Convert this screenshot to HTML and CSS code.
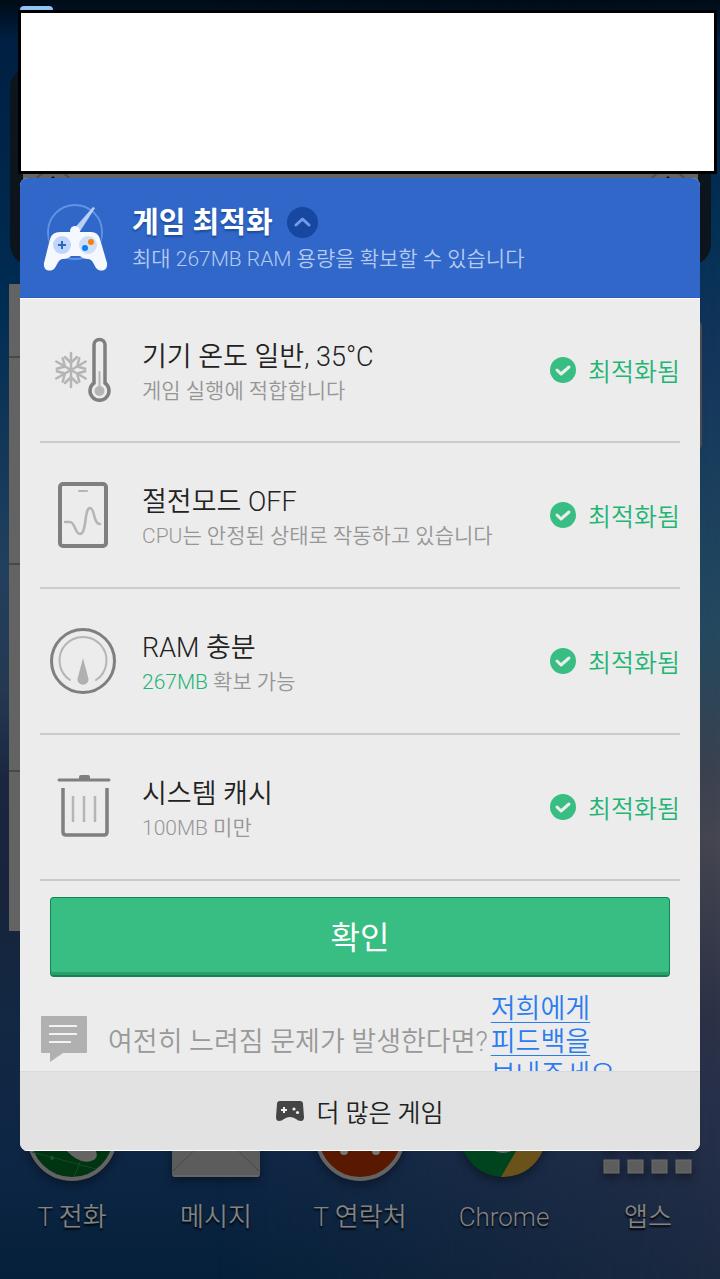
FILE: index.html
```html
<!DOCTYPE html>
<html lang="ko">
<head>
    <meta charset="UTF-8">
    <meta name="viewport" content="width=device-width, initial-scale=1.0">
    <title>게임 최적화</title>
    <link rel="stylesheet" href="styles.css">
</head>
<body>
    <div class="screen">
        <!-- Home screen behind the dialog -->
        <div class="home">
            <div class="clock-widget">
                <div class="clock-face">
                    <svg width="40" height="10" viewBox="0 0 40 10"><path d="M1 10A20 20 0 0 1 39 10" fill="none" stroke="#4d4d4d" stroke-width="2"/><path d="M17 5l3-3 3 3z" fill="#111"/></svg>
                    <svg width="40" height="10" viewBox="0 0 40 10"><path d="M1 10A20 20 0 0 1 39 10" fill="none" stroke="#4d4d4d" stroke-width="2"/><path d="M17 5l3-3 3 3z" fill="#111"/></svg>
                </div>
            </div>
            <div class="widgets">
                <div class="list-widget">
                    <div class="list-row"></div>
                    <div class="list-row"></div>
                    <div class="list-row"></div>
                    <div class="list-row"></div>
                </div>
                <div class="side-widget"></div>
            </div>
            <div class="dock">
                <div class="app">
                    <svg width="96" height="96" viewBox="0 0 96 96">
                        <circle cx="48" cy="50" r="43" fill="#003512" stroke="#636363" stroke-width="4"/>
                        <path d="M8 66l64 17M60 66L50 91" stroke="#1c4626" fill="none"/>
                        <circle cx="28" cy="72" r="2" fill="#27512f"/>
                        <path d="M40 62c10 12 24 18 32 10 2-4 0-8-4-10z" fill="#656565"/>
                    </svg>
                    <span>T 전화</span>
                </div>
                <div class="app">
                    <svg width="96" height="96" viewBox="0 0 96 96">
                        <rect x="4" y="30" width="88" height="61" rx="3" fill="#5c5c5c"/>
                        <path d="M5 85l28-27M91 85L63 58" stroke="#484848" fill="none"/>
                        <path d="M5 90h86" stroke="#707070"/>
                    </svg>
                    <span>메시지</span>
                </div>
                <div class="app">
                    <svg width="96" height="96" viewBox="0 0 96 96">
                        <circle cx="48" cy="50" r="43" fill="#581900" stroke="#636363" stroke-width="4"/>
                        <circle cx="32" cy="65" r="4" fill="#777"/>
                        <circle cx="64" cy="65" r="4" fill="#777"/>
                    </svg>
                    <span>T 연락처</span>
                </div>
                <div class="app">
                    <svg width="96" height="96" viewBox="0 0 96 96">
                        <circle cx="47" cy="48" r="43" fill="#00431f"/>
                        <path d="M45 91A43 43 0 0 0 90 48H70z" fill="#6b521b"/>
                        <circle cx="47" cy="48" r="19" fill="#656565"/>
                    </svg>
                    <span>Chrome</span>
                </div>
                <div class="app">
                    <svg width="96" height="96" viewBox="0 0 96 96">
                        <g fill="#5d5d5d" stroke="#6c6c6c">
                            <rect x="4" y="50" width="15" height="13"/><rect x="28" y="50" width="15" height="13"/><rect x="52" y="50" width="15" height="13"/><rect x="76" y="50" width="15" height="13"/>
                            <rect x="4" y="74" width="15" height="13"/><rect x="28" y="74" width="15" height="13"/><rect x="52" y="74" width="15" height="13"/><rect x="76" y="74" width="15" height="13"/>
                        </g>
                    </svg>
                    <span>앱스</span>
                </div>
            </div>
        </div>

        <div class="overlay">
            <div class="tab"></div>
            <div class="blank-box"></div>

            <div class="dialog" role="dialog" aria-labelledby="dialogTitle">
                <div class="dialog-header">
                    <svg width="66" height="68" viewBox="0 0 66 68">
                        <circle cx="32" cy="28" r="27" fill="none" stroke="#6292e6" stroke-width="2"/>
                        <path d="M6 29h52v10H6z" fill="#3067c8"/>
                        <path d="M29 27L50 3l2 1-16 25z" fill="#b9cff5"/>
                        <circle cx="32" cy="27" r="5" fill="#f5f8ff"/>
                        <path d="M17 28H48Q55 28 57 35L64 59C65 67 58 68 54 65C51 62 50 55 45 55Q40 55 37 52H28Q25 55 20 55C15 55 14 62 11 65C7 68 0 67 1 59L7 35Q9 28 17 28Z" fill="#f5f8ff"/>
                        <circle cx="19" cy="41" r="9" fill="#c0d5fb"/>
                        <circle cx="45" cy="41" r="9" fill="#d0dff8"/>
                        <path d="M19 37v8M15 41h8" stroke="#2f66c6" stroke-width="2"/>
                        <circle cx="48" cy="38" r="3" fill="#f7820a"/>
                        <circle cx="42" cy="44" r="3" fill="#0b80f4"/>
                    </svg>
                    <div class="header-text">
                        <div class="title-line">
                            <h1 id="dialogTitle">게임 최적화</h1>
                            <button class="collapse" aria-label="접기">
                                <svg width="31" height="31" viewBox="0 0 31 31"><path d="M9 18l6.500-6 6.500 6" fill="none" stroke="#6d9cf0" stroke-width="3" stroke-linecap="round" stroke-linejoin="round"/></svg>
                            </button>
                        </div>
                        <p>최대 267MB RAM 용량을 확보할 수 있습니다</p>
                    </div>
                </div>

                <ul class="checks">
                    <li class="check">
                        <svg width="68" height="68" viewBox="0 0 68 68" fill="none" stroke-linecap="round">
                            <g stroke="#b5b5b5" stroke-width="2.500">
                                <g id="arm"><path d="M22 17v34M16 21l6 6 6-6M16 47l6-6 6 6"/></g>
                                <use href="#arm" transform="rotate(60 22 34)"/>
                                <use href="#arm" transform="rotate(120 22 34)"/>
                            </g>
                            <path d="M45 47V9a5.500 5.500 0 0 1 11 0v38a9.500 9.500 0 1 1-11 0z" stroke="#7f7f7f" stroke-width="3.500"/>
                            <path d="M50.500 36v18" stroke="#b5b5b5" stroke-width="2"/>
                            <circle cx="50.500" cy="55" r="5" fill="#b5b5b5"/>
                        </svg>
                        <div class="check-text">
                            <h2>기기 온도 일반, 35°C</h2>
                            <p>게임 실행에 적합합니다</p>
                        </div>
                        <div class="status">
                            <svg width="26" height="26" viewBox="0 0 26 26"><circle cx="13" cy="13" r="13" fill="#38bd83"/><path d="M7 13l4 4 8-7" fill="none" stroke="#ededed" stroke-width="3" stroke-linecap="round" stroke-linejoin="round"/></svg>
                            <span>최적화됨</span>
                        </div>
                    </li>
                    <li class="check">
                        <svg width="68" height="68" viewBox="0 0 68 68" fill="none" stroke-linecap="round">
                            <rect x="11" y="3" width="46" height="62" rx="3" stroke="#7f7f7f" stroke-width="4"/>
                            <path d="M30 10h8" stroke="#b5b5b5" stroke-width="2"/>
                            <path d="M16 41h5c5 0 5 12 10 12 7 0 4-26 10-26 5 0 3 16 10 16" stroke="#b5b5b5" stroke-width="2.500"/>
                        </svg>
                        <div class="check-text">
                            <h2>절전모드 OFF</h2>
                            <p>CPU는 안정된 상태로 작동하고 있습니다</p>
                        </div>
                        <div class="status">
                            <svg width="26" height="26" viewBox="0 0 26 26"><circle cx="13" cy="13" r="13" fill="#38bd83"/><path d="M7 13l4 4 8-7" fill="none" stroke="#ededed" stroke-width="3" stroke-linecap="round" stroke-linejoin="round"/></svg>
                            <span>최적화됨</span>
                        </div>
                    </li>
                    <li class="check">
                        <svg width="68" height="68" viewBox="0 0 68 68" fill="none" stroke-linecap="round">
                            <circle cx="34" cy="34" r="31.500" stroke="#7f7f7f" stroke-width="3"/>
                            <path d="M21 53a23.500 23.500 0 1 1 26 0" stroke="#b5b5b5" stroke-width="2"/>
                            <path d="M34 31l5 19a5.500 5.500 0 1 1-10 0z" fill="#b0b0b0"/>
                        </svg>
                        <div class="check-text">
                            <h2>RAM 충분</h2>
                            <p><span class="green">267MB</span> 확보 가능</p>
                        </div>
                        <div class="status">
                            <svg width="26" height="26" viewBox="0 0 26 26"><circle cx="13" cy="13" r="13" fill="#38bd83"/><path d="M7 13l4 4 8-7" fill="none" stroke="#ededed" stroke-width="3" stroke-linecap="round" stroke-linejoin="round"/></svg>
                            <span>최적화됨</span>
                        </div>
                    </li>
                    <li class="check">
                        <svg width="68" height="68" viewBox="0 0 68 68" fill="none">
                            <path d="M10 7h50" stroke="#7f7f7f" stroke-width="3" stroke-linecap="round"/>
                            <path d="M30 6V4q0-2 2-2h7q2 0 2 2v2z" fill="#7f7f7f"/>
                            <path d="M14 15v44q0 3 3 3h38q3 0 3-3V15" stroke="#7f7f7f" stroke-width="3.500"/>
                            <path d="M24 23v26M35 23v26M46 23v26" stroke="#b5b5b5" stroke-width="2.500"/>
                        </svg>
                        <div class="check-text">
                            <h2>시스템 캐시</h2>
                            <p>100MB 미만</p>
                        </div>
                        <div class="status">
                            <svg width="26" height="26" viewBox="0 0 26 26"><circle cx="13" cy="13" r="13" fill="#38bd83"/><path d="M7 13l4 4 8-7" fill="none" stroke="#ededed" stroke-width="3" stroke-linecap="round" stroke-linejoin="round"/></svg>
                            <span>최적화됨</span>
                        </div>
                    </li>
                </ul>

                <button class="confirm">확인</button>

                <div class="feedback-area">
                    <div class="feedback">
                        <svg width="48" height="56" viewBox="0 0 48 56">
                            <path d="M2 1h44q1 0 1 1v35q0 1-1 1H23L10 47V38H2q-1 0-1-1V2q0-1 1-1z" fill="#b0b0b0"/>
                            <path d="M9 11h28M9 19h28M9 27h22" stroke="#f2f2f2" stroke-width="2"/>
                        </svg>
                        <span>여전히 느려짐 문제가 발생한다면?</span>
                        <a href="#">저희에게 피드백을 보내주세요</a>
                    </div>
                </div>

                <button class="more-games">
                    <svg width="28" height="20" viewBox="0 0 28 20">
                        <path d="M4 0H24Q27 0 27 3L28 16Q28 20 25 20Q22 20 20 18Q17 16 14 16Q11 16 8 18Q6 20 3 20Q0 20 0 16L1 3Q1 0 4 0Z" fill="#444"/>
                        <path d="M8 6v6M5 9h6" stroke="#eee" stroke-width="2"/>
                        <circle cx="18" cy="8" r="1.600" fill="#eee"/><circle cx="21.500" cy="11.500" r="1.600" fill="#eee"/>
                    </svg>
                    더 많은 게임
                </button>
            </div>
        </div>
    </div>
</body>
</html>
```
FILE: styles.css
```css
* {
    box-sizing: border-box;
}

body {
    margin: 0;
    font-family: Roboto, 'Noto Sans CJK KR', sans-serif;
    font-weight: 350;
    word-break: keep-all;
}

h1, h2, p, ul {
    margin: 0;
    padding: 0;
}

svg {
    display: block;
    flex: none;
}

button {
    border: none;
    padding: 0;
    font-family: inherit;
    cursor: pointer;
}

.screen {
    position: relative;
    min-height: 100vh;
    overflow: hidden;
    background: linear-gradient(#000b16, #001f42 40px, #002c52 300px, #22405e 570px, #253851 690px, #1a2640 780px, #17243c 900px, #122843 1020px, #0d2645 1160px, #05203a 1279px);
}

/* warmer tones on the right half of the wallpaper */
.screen::before {
    content: '';
    position: absolute;
    inset: 0;
    background: linear-gradient(#000b16, #001f42 40px, #023054 220px, #11345a 340px, #23495f 624px, #3a4250 767px, #454650 838px, #2c3146 1017px, #27304a 1100px, #1b2940 1279px);
    -webkit-mask-image: linear-gradient(to right, transparent 30%, #000);
    mask-image: linear-gradient(to right, transparent 30%, #000);
}

/* home screen */
.home {
    position: relative;
    display: flex;
    flex-direction: column;
    min-height: 100vh;
    padding-top: 66px;
}

.clock-widget {
    height: 200px;
    margin: 0 9px 18px 10px;
    padding: 107px 13px 0;
    border-radius: 22px;
    background: #0d151c;
}

.clock-face {
    display: flex;
    justify-content: space-between;
    height: 60px;
    padding: 1px 10px;
    background: #646464;
}

.widgets {
    display: flex;
    justify-content: space-between;
    margin: 0 18px 0 9px;
}

.list-widget {
    width: 50%;
    background: #636363;
}

.list-row {
    height: 207px;
    border-bottom: 2px solid #484848;
}

.list-row:first-child {
    height: 74px;
}

.list-row:last-child {
    height: 159px;
    border: none;
}

.side-widget {
    width: 40%;
    height: 130px;
    margin-top: 36px;
    border-radius: 6px;
    background: #4c4c4c;
}

.dock {
    display: grid;
    grid-template-columns: repeat(5, 1fr);
    margin-top: auto;
    padding-bottom: 42px;
}

.app {
    display: flex;
    flex-direction: column;
    align-items: center;
    gap: 15px;
    font-size: 26px;
    line-height: 40px;
    color: #838383;
    text-shadow: 0 2px 2px #000;
}

.app svg {
    filter: drop-shadow(0 4px 5px rgba(0, 0, 0, 0.4));
}

/* dialog */
.overlay {
    position: absolute;
    inset: 0;
    padding: 6px 20px 0;
}

.tab {
    width: 33px;
    height: 4px;
    border-radius: 4px 4px 0 0;
    background: #8fc4f5;
}

.blank-box {
    height: 164px;
    margin: 0 -17px 4px -2px;
    border: 3px solid #000;
    background: #fff;
}

.dialog {
    overflow: hidden;
    border-radius: 8px;
    background: #ececec;
}

.dialog-header {
    display: flex;
    align-items: center;
    gap: 23px;
    height: 120px;
    padding: 0 23px;
    background: #3067c8;
    border-bottom: 1px solid #2b5dba;
}

.header-text {
    flex: 1;
    padding-top: 2px;
}

.title-line {
    display: flex;
    align-items: center;
    gap: 14px;
}

.title-line h1 {
    font-size: 29px;
    font-weight: 700;
    line-height: 40px;
    color: #fff;
    text-shadow: 0 2px 2px #1d4b9e;
}

.collapse {
    border-radius: 50%;
    background: #17479e;
}

.header-text p {
    font-size: 21px;
    line-height: 32px;
    color: #b5caf0;
}

.checks {
    padding: 0 20px;
    list-style: none;
    border-top: 1px solid #fff;
}

.check {
    display: flex;
    align-items: center;
    height: 146px;
    padding-left: 9px;
    border-bottom: 2px solid #cbcbcb;
}

.check:first-child {
    height: 144px;
}

.check-text {
    flex: 1;
    padding: 6px 0 0 25px;
}

.check-text h2 {
    font-size: 27px;
    font-weight: 350;
    line-height: 36px;
    color: #222;
}

.check-text p {
    font-size: 21px;
    line-height: 32px;
    color: #969696;
}

.check-text .green {
    color: #1fb574;
}

.status {
    display: flex;
    align-items: center;
    gap: 12px;
    font-size: 25px;
    color: #1fb574;
}

.confirm {
    display: block;
    width: calc(100% - 60px);
    height: 80px;
    margin: 16px 30px 0;
    padding-bottom: 4px;
    border: 1px solid #128557;
    border-bottom-width: 2px;
    border-radius: 4px;
    box-shadow: inset 0 -3px #2a9e6b;
    background: #38bd83;
    font-size: 32px;
    font-weight: 400;
    color: #fff;
}

.feedback-area {
    height: 94px;
    padding-top: 16px;
    overflow: hidden;
}

.feedback {
    display: flex;
    align-items: center;
    padding: 0 20px;
    font-size: 27px;
    line-height: 33px;
    color: #999;
}

.feedback span {
    flex: none;
    padding: 0 3px 0 20px;
}

.feedback a {
    color: #2b7cf0;
    text-underline-offset: 4px;
    text-decoration-thickness: 1px;
}

.more-games {
    display: flex;
    align-items: center;
    justify-content: center;
    gap: 12px;
    width: 100%;
    height: 80px;
    border-top: 1px solid #dadada;
    border-bottom: 1px solid #fff;
    background: #e2e2e2;
    font-size: 25px;
    font-weight: 350;
    color: #222;
}
```
